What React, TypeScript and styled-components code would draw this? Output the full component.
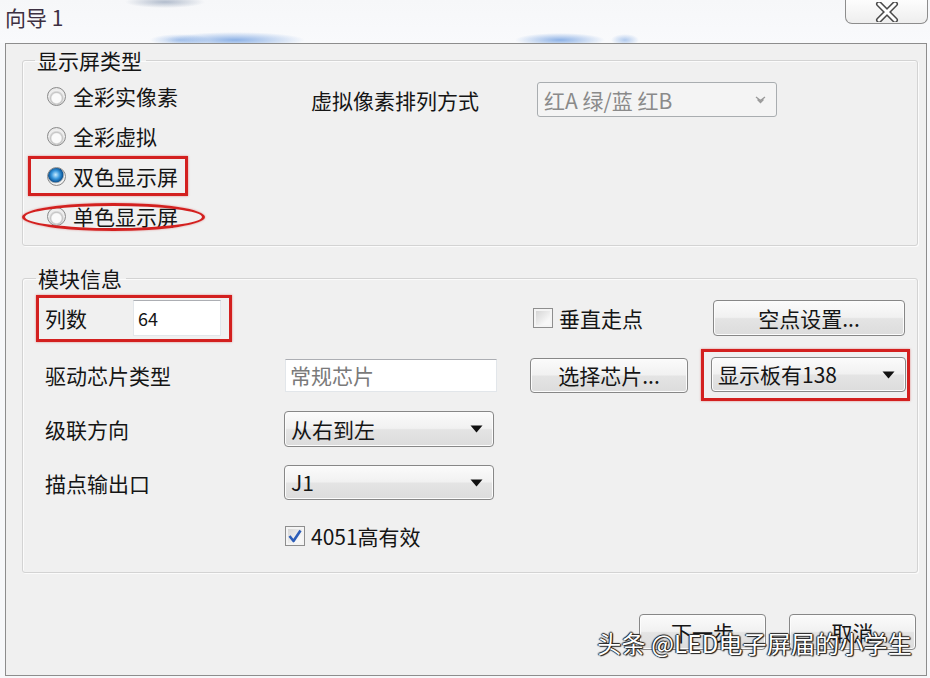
import styled, { createGlobalStyle, css } from "styled-components";

const GlobalStyle = createGlobalStyle`
  html, body {
    margin: 0;
    padding: 0;
    background: #f7f8fa;
  }
  body {
    font-family: "Noto Sans CJK SC", "Noto Sans", sans-serif;
    color: #151515;
  }
`;

const red = "#d3201f";

const Window = styled.div`
  position: relative;
  width: 930px;
  height: 678px;
  overflow: hidden;
`;

const TitleBar = styled.div`
  display: flex;
  justify-content: space-between;
  align-items: flex-start;
  height: 43px;
  background:
    radial-gradient(ellipse 40px 6px at 165px 2px, rgba(110, 130, 160, 0.5), transparent),
    radial-gradient(ellipse 70px 8px at 235px 40px, rgba(70, 130, 215, 0.6), transparent),
    radial-gradient(ellipse 30px 6px at 180px 40px, rgba(70, 130, 215, 0.4), transparent),
    radial-gradient(ellipse 45px 7px at 560px 40px, rgba(70, 130, 215, 0.6), transparent),
    radial-gradient(ellipse 14px 6px at 625px 40px, rgba(70, 130, 215, 0.4), transparent),
    linear-gradient(#f6f7f9, #f9fafc);
`;

const Title = styled.div`
  padding-left: 5px;
  font-size: 21px;
  line-height: 34px;
  color: #3d3042;
`;

const CloseButton = styled.div`
  display: flex;
  align-items: center;
  justify-content: center;
  width: 83px;
  height: 24px;
  margin-right: 2px;
  box-sizing: border-box;
  border: 1px solid #8d8d8d;
  border-top: none;
  border-radius: 0 0 7px 7px;
  background: linear-gradient(#fdfdfd, #eeeeee);
`;

const Panel = styled.div`
  display: flex;
  flex-direction: column;
  box-sizing: border-box;
  width: 922px;
  height: 633px;
  margin-left: 5px;
  padding: 4px 8px 0 16px;
  border: 1px solid #8d8d8d;
  background: #f0f0f0;
`;

const GroupBox = styled.fieldset<{ $pad: string; $gap?: number }>`
  margin: ${(p) => p.$gap ?? 0}px 0 0 0;
  padding: ${(p) => p.$pad};
  min-width: 0;
  border: 1px solid #d3d3d3;
  border-radius: 3px;
  box-shadow: inset 1px 1px 0 #fbfbfb, 1px 1px 0 #fbfbfb;
`;

const Legend = styled.legend<{ $offset: number }>`
  margin-left: ${(p) => p.$offset}px;
  padding: 0 4px 0 2px;
  font-size: 21px;
  line-height: 24px;
`;

const TypeRow = styled.div`
  display: flex;
  align-items: flex-start;
`;

const RadioList = styled.div`
  display: flex;
  flex-direction: column;
  width: 283px;
`;

const RadioItem = styled.label<{ $marked?: boolean; $circled?: boolean }>`
  position: relative;
  display: flex;
  align-items: center;
  gap: 7px;
  box-sizing: border-box;
  height: 40px;
  padding-left: 19px;
  font-size: 21px;
  ${(p) =>
    p.$marked &&
    css`
      width: 160px;
      padding-left: 16px;
      border: 3px solid ${red};
      box-shadow: 0 0 2px rgba(210, 30, 30, 0.5);
    `}
  ${(p) =>
    p.$circled &&
    css`
      &::after {
        content: "";
        position: absolute;
        left: -6px;
        top: 7px;
        width: 183px;
        height: 28px;
        box-sizing: border-box;
        border: 3px solid ${red};
        border-radius: 50%;
        box-shadow: 0 0 2px rgba(210, 30, 30, 0.5);
      }
    `}
`;

const Radio = styled.span<{ $checked?: boolean }>`
  flex: none;
  width: 19px;
  height: 19px;
  box-sizing: border-box;
  border-radius: 50%;
  border: 1px solid #8a8a8a;
  background: ${(p) =>
    p.$checked
      ? "radial-gradient(circle at 45% 40%, #c8ecff 0, #3796dc 30%, #0e5696 52%, #8a9aa8 56%, #f4f4f4 64%, #d6d6d6 100%)"
      : "radial-gradient(circle at 50% 60%, #fafafa 0 34%, #c4c4c4 44%, #efefef 58%, #dadada 100%)"};
`;

const VirtualRow = styled.div`
  display: flex;
  align-items: center;
  height: 35px;
  margin-top: 6px;
`;

const FieldLabel = styled.span<{ $width?: number; $pad?: number }>`
  flex: none;
  width: ${(p) => (p.$width ? `${p.$width}px` : "auto")};
  padding-left: ${(p) => p.$pad ?? 0}px;
  font-size: 21px;
  white-space: nowrap;
`;

const buttonFace = css`
  box-sizing: border-box;
  border: 1px solid #878787;
  border-radius: 4px;
  background: linear-gradient(#fbfbfb 0%, #f1f1f1 48%, #e4e4e4 52%, #dcdcdc 100%);
  box-shadow: inset 0 0 0 1px #fcfcfc;
  font-size: 21px;
  color: #151515;
`;

const Combo = styled.div<{ $w: number; $h: number; $ml?: number }>`
  ${buttonFace};
  display: flex;
  align-items: center;
  justify-content: space-between;
  width: ${(p) => p.$w}px;
  height: ${(p) => p.$h}px;
  margin-left: ${(p) => p.$ml ?? 0}px;
  padding: 0 10px 0 6px;
  line-height: 1;
`;

const DisabledCombo = styled.div`
  display: flex;
  align-items: center;
  justify-content: space-between;
  box-sizing: border-box;
  width: 240px;
  height: 35px;
  padding: 0 10px 0 6px;
  border: 1px solid #a9adb0;
  border-radius: 3px;
  background: #f4f4f4;
  font-size: 21px;
  color: #8a8a8a;
`;

const TextBox = styled.div<{ $w: number; $h: number; $ml?: number; $muted?: boolean }>`
  display: flex;
  align-items: center;
  box-sizing: border-box;
  width: ${(p) => p.$w}px;
  height: ${(p) => p.$h}px;
  margin-left: ${(p) => p.$ml ?? 0}px;
  padding-left: 4px;
  border: 1px solid #e2e6ea;
  border-top-color: #acaeb3;
  background: #fff;
  font-size: ${(p) => (p.$muted ? 21 : 18)}px;
  color: ${(p) => (p.$muted ? "#7a7a7a" : "#151515")};
`;

const PushButton = styled.div<{ $w: number; $h: number; $ml?: number }>`
  ${buttonFace};
  display: flex;
  align-items: center;
  justify-content: center;
  width: ${(p) => p.$w}px;
  height: ${(p) => p.$h}px;
  margin-left: ${(p) => p.$ml ?? 0}px;
`;

const Highlight = styled.div<{ $w: number; $h: number; $pad: string }>`
  display: flex;
  align-items: center;
  box-sizing: border-box;
  width: ${(p) => p.$w}px;
  height: ${(p) => p.$h}px;
  padding: ${(p) => p.$pad};
  border: 3px solid ${red};
  box-shadow: 0 0 2px rgba(210, 30, 30, 0.5);
`;

const ModuleGrid = styled.div`
  display: grid;
  grid-template-columns: 248px 246px 171px 209px;
  grid-template-rows: 48px 66px 42px 65px 42px;
  align-items: center;
`;

const Cell = styled.div<{ $col: number; $row: number; $ml?: number }>`
  display: flex;
  align-items: center;
  grid-column: ${(p) => p.$col};
  grid-row: ${(p) => p.$row};
  margin-left: ${(p) => p.$ml ?? 0}px;
`;

const CheckRow = styled.label`
  display: flex;
  align-items: center;
  gap: 6px;
  font-size: 21px;
`;

const CheckBox = styled.span`
  display: flex;
  align-items: center;
  justify-content: center;
  flex: none;
  width: 20px;
  height: 20px;
  box-sizing: border-box;
  border: 1px solid #8e8e8e;
  background: linear-gradient(135deg, #cfcfcf, #f7f7f7 70%);
  box-shadow: inset 0 0 0 2px #f4f4f4;
`;

const Footer = styled.div`
  display: flex;
  justify-content: flex-end;
  gap: 23px;
  margin-top: 41px;
  padding-right: 2px;
`;

const Watermark = styled.div`
  position: absolute;
  right: 18px;
  bottom: 18px;
  font-size: 24px;
  color: #fff;
  letter-spacing: 0.2px;
  text-shadow:
    1px 1px 1px #1e1e1e,
    -1px 0 1px #1e1e1e,
    0 -1px 1px #1e1e1e,
    1px 0 1px #1e1e1e;
`;

const Arrow = () => (
  <svg width="13" height="8" viewBox="0 0 13 8">
    <path d="M0.5 0.5 H12.5 L6.5 7.5 Z" fill="#111" />
  </svg>
);

const SmallChevron = () => (
  <svg width="11" height="8" viewBox="0 0 11 8">
    <path d="M1 1 L5.5 4.5 L10 1 M2.5 3.5 L5.5 6.5 L8.5 3.5" fill="none" stroke="#9a9a9a" strokeWidth="1.3" />
  </svg>
);

const CloseIcon = () => (
  <svg width="26" height="20" viewBox="0 0 26 20">
    <path d="M5 2 L21 18 M21 2 L5 18" stroke="#4a4a4a" strokeWidth="6" strokeLinecap="round" />
    <path d="M5 2 L21 18 M21 2 L5 18" stroke="#fff" strokeWidth="3" strokeLinecap="round" />
  </svg>
);

const CheckMark = () => (
  <svg width="16" height="16" viewBox="0 0 16 16">
    <path d="M2.5 8 L6.5 13 L13.5 2.5" fill="none" stroke="#2c5db8" strokeWidth="2.6" strokeLinejoin="round" />
  </svg>
);

const screenTypes = [
  { label: "全彩实像素" },
  { label: "全彩虚拟" },
  { label: "双色显示屏", checked: true, marked: true },
  { label: "单色显示屏", circled: true },
];

export default function App() {
  return (
    <>
      <GlobalStyle />
      <Window>
        <TitleBar>
          <Title>向导 1</Title>
          <CloseButton>
            <CloseIcon />
          </CloseButton>
        </TitleBar>

        <Panel>
          <GroupBox $pad="4px 8px 9px 5px">
            <Legend $offset={7}>显示屏类型</Legend>
            <TypeRow>
              <RadioList>
                {screenTypes.map((t) => (
                  <RadioItem key={t.label} $marked={t.marked} $circled={t.circled}>
                    <Radio $checked={t.checked} />
                    {t.label}
                  </RadioItem>
                ))}
              </RadioList>
              <VirtualRow>
                <FieldLabel $width={226}>虚拟像素排列方式</FieldLabel>
                <DisabledCombo>
                  红A 绿/蓝 红B
                  <SmallChevron />
                </DisabledCombo>
              </VirtualRow>
            </TypeRow>
          </GroupBox>

          <GroupBox $pad="4px 8px 15px 13px" $gap={20}>
            <Legend $offset={0}>模块信息</Legend>
            <ModuleGrid>
              <Cell $col={1} $row={1}>
                <Highlight $w={196} $h={47} $pad="0 0 0 6px">
                  <FieldLabel $width={88}>列数</FieldLabel>
                  <TextBox $w={88} $h={36}>64</TextBox>
                </Highlight>
              </Cell>
              <Cell $col={3} $row={1} $ml={3}>
                <CheckRow>
                  <CheckBox />
                  垂直走点
                </CheckRow>
              </Cell>
              <Cell $col={4} $row={1}>
                <PushButton $w={192} $h={36} $ml={12}>空点设置...</PushButton>
              </Cell>

              <Cell $col={1} $row={2}>
                <FieldLabel $pad={9}>驱动芯片类型</FieldLabel>
              </Cell>
              <Cell $col={2} $row={2}>
                <TextBox $w={212} $h={33} $ml={1} $muted>常规芯片</TextBox>
              </Cell>
              <Cell $col={3} $row={2}>
                <PushButton $w={158} $h={35}>选择芯片...</PushButton>
              </Cell>
              <Cell $col={4} $row={2}>
                <Highlight $w={209} $h={52} $pad="5px 1px 6px 7px">
                  <Combo $w={195} $h={35}>
                    显示板有138
                    <Arrow />
                  </Combo>
                </Highlight>
              </Cell>

              <Cell $col={1} $row={3}>
                <FieldLabel $pad={9}>级联方向</FieldLabel>
              </Cell>
              <Cell $col={2} $row={3}>
                <Combo $w={210} $h={36}>
                  从右到左
                  <Arrow />
                </Combo>
              </Cell>

              <Cell $col={1} $row={4}>
                <FieldLabel $pad={9}>描点输出口</FieldLabel>
              </Cell>
              <Cell $col={2} $row={4}>
                <Combo $w={210} $h={35}>
                  J1
                  <Arrow />
                </Combo>
              </Cell>

              <Cell $col={2} $row={5} $ml={1}>
                <CheckRow>
                  <CheckBox>
                    <CheckMark />
                  </CheckBox>
                  4051高有效
                </CheckRow>
              </Cell>
            </ModuleGrid>
          </GroupBox>

          <Footer>
            <PushButton $w={127} $h={36}>下一步</PushButton>
            <PushButton $w={127} $h={36}>取消</PushButton>
          </Footer>
        </Panel>

        <Watermark>头条 @LED电子屏届的小学生</Watermark>
      </Window>
    </>
  );
}
